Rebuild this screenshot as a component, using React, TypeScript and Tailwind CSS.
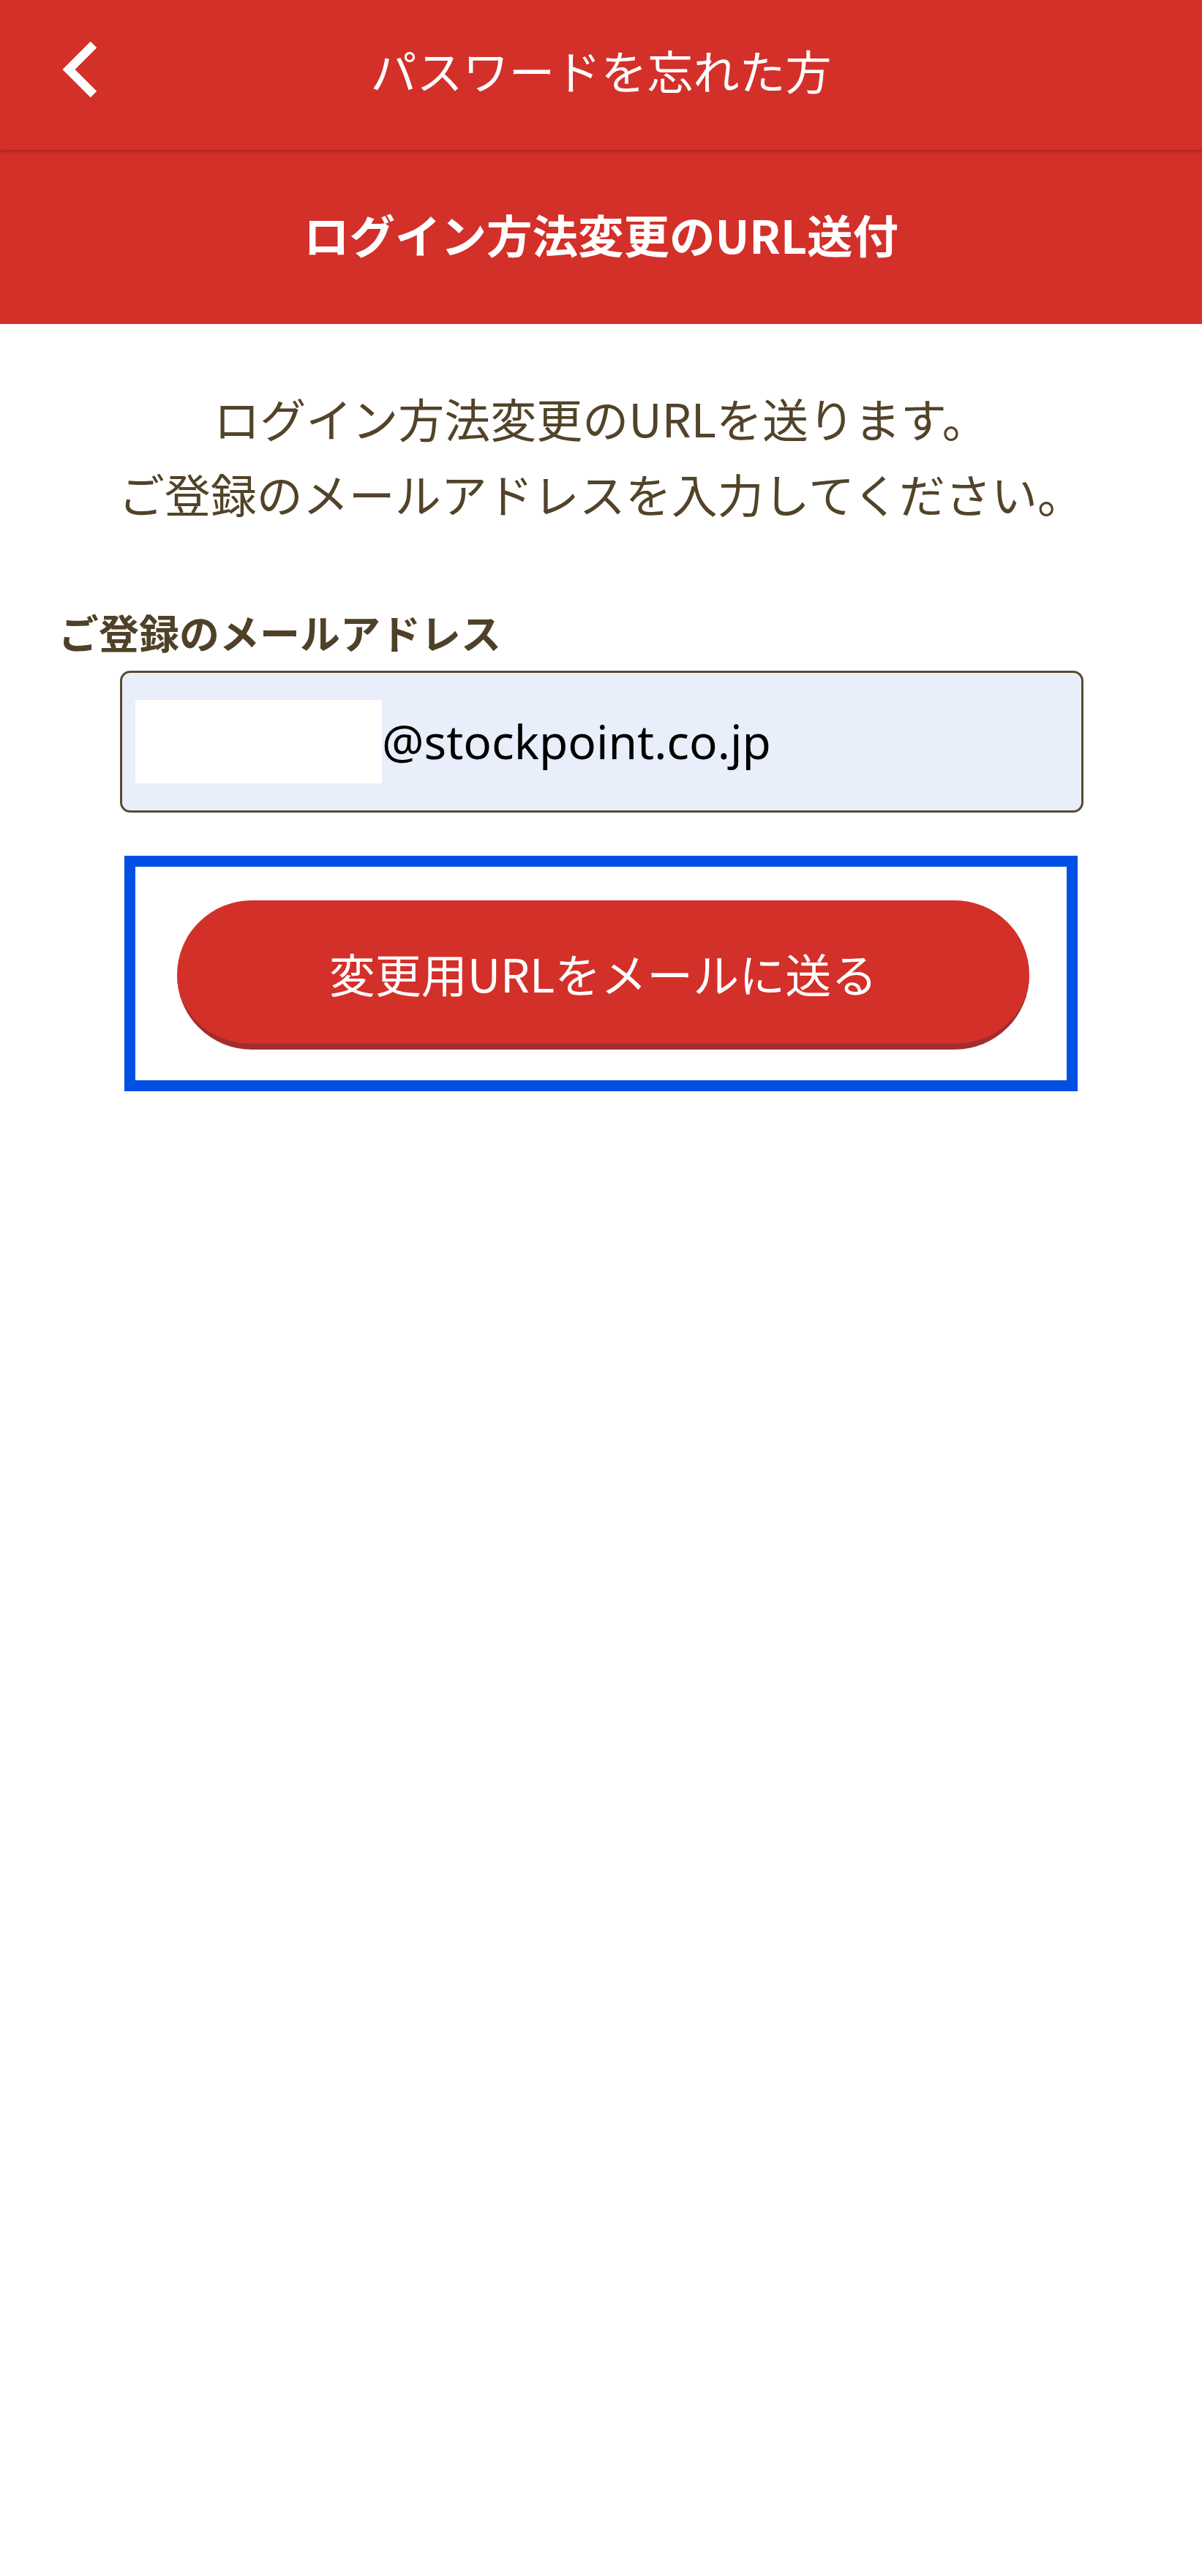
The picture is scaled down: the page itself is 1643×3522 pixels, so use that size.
import { SVGProps } from "react"

export default function App() {
  return (
    <div className="min-h-screen w-full bg-white font-['Noto_Sans_CJK_JP','Noto_Sans',sans-serif]">
      <header className="relative z-10 grid h-[205px] grid-cols-[1fr_auto_1fr] items-center bg-[#d3302a] pb-4 text-white shadow-[0_3px_3px_rgba(120,20,15,0.35)]">
        <button className="ml-[82px] flex h-[80px] w-[60px] items-center justify-start">
          <ChevronLeftIcon className="h-[76px] w-[56px]" />
        </button>
        <h1 className="text-[63px] leading-none font-normal">パスワードを忘れた方</h1>
        <div />
      </header>

      <div className="flex h-[238px] items-center justify-center bg-[#d3302a] pb-2 text-white">
        <h2 className="text-[62.5px] leading-none font-bold">ログイン方法変更のURL送付</h2>
      </div>

      <main className="flex flex-col pt-[76px]">
        <p className="text-center text-[63px] leading-[103px] text-[#524329]">
          ログイン方法変更のURLを送ります。
          <br />
          ご登録のメールアドレスを入力してください。
        </p>

        <label className="mt-[103px] pl-[80px] text-[55px] leading-[70px] font-bold text-[#4f4128]">
          ご登録のメールアドレス
        </label>

        <div className="mt-[19px] ml-[164px] flex h-[194px] w-[1317px] items-center rounded-[14px] border-[3px] border-[#5a4b32] bg-[#e8eefa] pl-[18px]">
          <div className="h-[114px] w-[337px] bg-white" />
          <span className="font-['Noto_Sans',sans-serif] text-[64px] leading-none text-black">@stockpoint.co.jp</span>
        </div>

        <div className="mt-[59px] ml-[170px] w-[1303px] border-[15px] border-[#0050e4] pt-[46px] pr-[51px] pb-[42px] pl-[57px]">
          <button className="flex h-[204px] w-full items-center justify-center rounded-full border-b-[8px] border-[#a22d2d] bg-[#d3302a] text-[63px] leading-none text-white">
            変更用URLをメールに送る
          </button>
        </div>
      </main>
    </div>
  )
}

function ChevronLeftIcon(props: SVGProps<SVGSVGElement>) {
  return (
    <svg
      {...props}
      xmlns="http://www.w3.org/2000/svg"
      viewBox="0 0 56 76"
      fill="none"
      stroke="currentColor"
      strokeWidth="12"
      strokeLinecap="butt"
      strokeLinejoin="miter"
    >
      <path d="M46 4 12 38l34 34" />
    </svg>
  )
}
